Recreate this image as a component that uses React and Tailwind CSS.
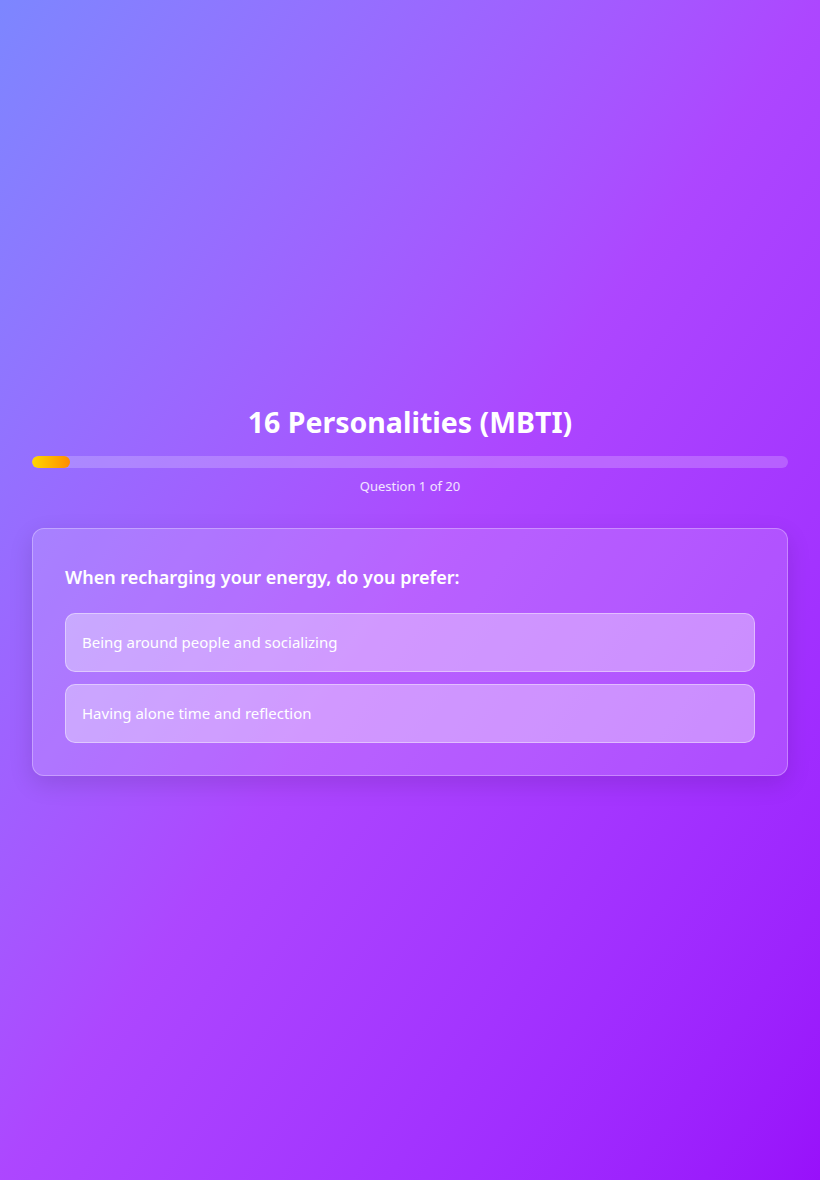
import { useState } from "react";

const options = [
  "Being around people and socializing",
  "Having alone time and reflection",
];

export default function App() {
  const [picked, setPicked] = useState(null);

  return (
    <div
      className="min-h-screen w-full flex items-center justify-center bg-linear-to-br from-indigo-400 via-purple-500 to-purple-600 px-8"
      style={{ fontFamily: '"Noto Sans", "Open Sans", sans-serif' }}
    >
      <div className="w-full">
        <h1 className="text-center text-[28.5px] leading-9 font-bold text-white">
          16 Personalities (MBTI)
        </h1>
        <div className="mt-4 h-3 w-full rounded-full bg-white/20 overflow-hidden">
          <div className="h-full w-[5%] rounded-full bg-linear-to-r from-[#ffd700] to-[#ff8c00]" />
        </div>
        <p className="mt-2 text-center text-[13px] leading-5 text-white/85">Question 1 of 20</p>

        <div className="mt-8 rounded-xl border border-white/30 bg-white/15 p-8 shadow-[0_8px_24px_rgba(0,0,0,0.12)]">
          <h2 className="mb-5 text-lg font-semibold text-white leading-8">
            When recharging your energy, do you prefer:
          </h2>
          <div className="flex flex-col gap-3">
            {options.map((opt, i) => (
              <button
                key={opt}
                onClick={() => setPicked(i)}
                className={`w-full text-left rounded-[10px] border border-white/40 px-4 py-4 text-[15px] leading-[25px] text-white ${
                  picked === i ? "bg-white/50" : "bg-white/35"
                }`}
              >
                {opt}
              </button>
            ))}
          </div>
        </div>
      </div>
    </div>
  );
}
